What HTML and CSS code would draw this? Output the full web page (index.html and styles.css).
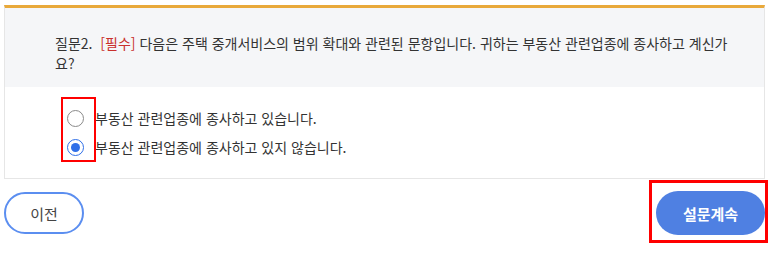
FILE: index.html
```html
<!DOCTYPE html>
<html lang="ko">
<head>
<meta charset="utf-8">
<link rel="stylesheet" href="styles.css">
</head>
<body>
<div class="card">
  <div class="question">
    <p class="q-text">질문2. &nbsp;<span class="req">[필수]</span> 다음은 주택 중개서비스의 범위 확대와 관련된 문항입니다. 귀하는 부동산 관련업종에 종사하고 계신가요?</p>
  </div>
  <div class="options">
    <label class="opt"><span class="radio"></span><span>부동산 관련업종에 종사하고 있습니다.</span></label>
    <label class="opt"><span class="radio checked"></span><span>부동산 관련업종에 종사하고 있지 않습니다.</span></label>
    <div class="mark mark-radio"></div>
  </div>
</div>
<div class="actions">
  <button class="btn btn-prev">이전</button>
  <div class="next-wrap">
    <button class="btn btn-next">설문계속</button>
    <div class="mark mark-next"></div>
  </div>
</div>
</body>
</html>
```

FILE: styles.css
```css
* { box-sizing: border-box; }
html, body { background: #fff; }
body {
  margin: 0;
  padding: 5px 8px 0 4px;
  min-height: 254px;
  font-family: "Noto Sans CJK KR", "Noto Sans", sans-serif;
  color: #333;
}
.card {
  width: 761px;
  border: 1px solid #e6e6e6;
  border-top: 3px solid #e9a93a;
}
.question {
  background: #f5f6f8;
  padding: 25px 28px 14px 50px;
}
.q-text {
  margin: 0;
  font-size: 14px;
  line-height: 20px;
  color: #333;
}
.req { color: #c9302c; }
.options {
  position: relative;
  padding: 23px 0 22px 62px;
  display: flex;
  flex-direction: column;
  gap: 12px;
}
.opt {
  display: flex;
  align-items: center;
  gap: 11px;
  font-size: 14px;
  line-height: 17px;
  color: #333;
}
.radio {
  width: 17px;
  height: 17px;
  border-radius: 50%;
  border: 1px solid #8a8a8a;
  background: #fff;
  flex: none;
  position: relative;
}
.radio.checked {
  border: 1px solid #2f6fe8;
}
.radio.checked::after {
  content: "";
  position: absolute;
  left: 3px; top: 3px;
  width: 9px; height: 9px;
  border-radius: 50%;
  background: #2f6fe8;
}
.mark {
  position: absolute;
  border: 2px solid #ff0000;
}
.mark-radio {
  left: 56px;
  top: 10px;
  width: 35px;
  height: 65px;
}
.actions {
  display: flex;
  justify-content: space-between;
  align-items: center;
  width: 761px;
  padding-top: 12px;
}
.btn {
  font-family: "Noto Sans CJK KR", "Noto Sans", sans-serif;
  border-radius: 22px;
  cursor: pointer;
}
.btn-prev {
  width: 80px;
  height: 42px;
  border: 2px solid #5b8ef0;
  background: #fff;
  color: #444;
  font-size: 15px;
}
.next-wrap {
  position: relative;
}
.btn-next {
  width: 109px;
  height: 44px;
  border: none;
  background: #4f80e2;
  color: #fff;
  font-size: 15px;
  font-weight: bold;
}
.mark-next {
  left: -7px;
  top: -11px;
  width: 119px;
  height: 63px;
  border-width: 3px;
}
```
